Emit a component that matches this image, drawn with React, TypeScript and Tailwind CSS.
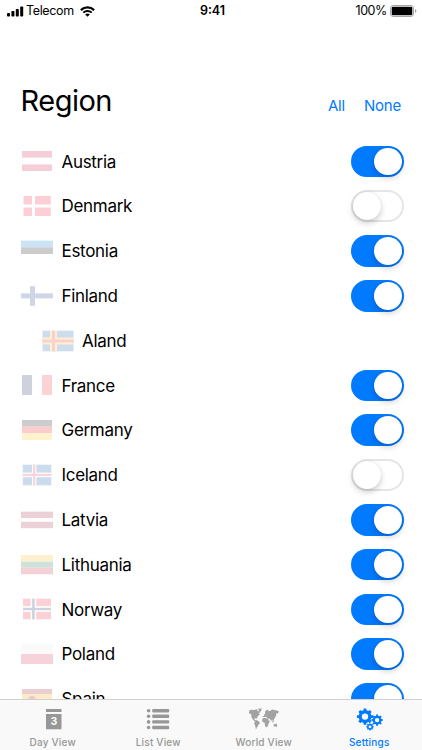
import React from 'react'

type Stripe = [x: number, y: number, width: number, height: number, fill: string]

interface Region {
  name: string
  flag: Stripe[]
  enabled?: boolean
  nested?: boolean
}

// Flags are drawn on a 32x22 grid in their faded colours
const regions: Region[] = [
  {
    name: 'Austria',
    enabled: true,
    flag: [
      [1, 1, 30, 6.6, '#f5ced7'],
      [1, 14.4, 30, 6.6, '#f5ced7'],
    ],
  },
  {
    name: 'Denmark',
    enabled: false,
    flag: [
      [2.5, 1, 8.5, 8.5, '#fccfd7'],
      [14, 1, 15.8, 8.5, '#fccfd7'],
      [2.5, 12.5, 8.5, 8.5, '#fccfd7'],
      [14, 12.5, 15.8, 8.5, '#fccfd7'],
    ],
  },
  {
    name: 'Estonia',
    enabled: true,
    flag: [
      [0, 0.6, 32, 7, '#cbe3f5'],
      [0, 7.4, 32, 6.6, '#cccccc'],
    ],
  },
  {
    name: 'Finland',
    enabled: true,
    flag: [
      [0, 8.4, 32, 5, '#ced6e8'],
      [9, 1.2, 5, 19.6, '#ced6e8'],
    ],
  },
  {
    name: 'Aland',
    nested: true,
    flag: [
      [0.5, 0.7, 31, 20.6, '#cddded'],
      [8, 0.7, 7, 20.6, '#fff0cf'],
      [0.5, 7.5, 31, 7, '#fff0cf'],
      [10, 0.7, 3, 20.6, '#fbcfd0'],
      [0.5, 9.6, 31, 2.8, '#fbcfd0'],
    ],
  },
  {
    name: 'France',
    enabled: true,
    flag: [
      [1, 1, 10, 20, '#ced1de'],
      [21, 1, 10, 20, '#fcd2d5'],
    ],
  },
  {
    name: 'Germany',
    enabled: true,
    flag: [
      [1, 1, 30, 6.7, '#cccccc'],
      [1, 7.7, 30, 6.6, '#fccdcf'],
      [1, 14.3, 30, 6.7, '#fff3ce'],
    ],
  },
  {
    name: 'Iceland',
    enabled: false,
    flag: [
      [1.8, 0.7, 28.5, 20.6, '#cddcec'],
      [11, 0.7, 4.4, 20.6, '#ffffff'],
      [1.8, 8.6, 28.5, 4.6, '#ffffff'],
      [12.1, 0.7, 2.2, 20.6, '#f9d2db'],
      [1.8, 9.8, 28.5, 2.2, '#f9d2db'],
    ],
  },
  {
    name: 'Latvia',
    enabled: true,
    flag: [
      [0, 2.6, 32, 6.4, '#ecd1d8'],
      [0, 12.8, 32, 6.4, '#ecd1d8'],
    ],
  },
  {
    name: 'Lithuania',
    enabled: true,
    flag: [
      [0, 1, 32, 6.7, '#fef0cf'],
      [0, 7.7, 32, 6, '#cde2da'],
      [0, 13.7, 32, 6.6, '#f4d1d7'],
    ],
  },
  {
    name: 'Norway',
    enabled: true,
    flag: [
      [2, 0.7, 28, 20.6, '#fcd1d6'],
      [9.6, 0.7, 5.6, 20.6, '#ffffff'],
      [2, 8.2, 28, 5.6, '#ffffff'],
      [11.1, 0.7, 2.6, 20.6, '#cdd2e0'],
      [2, 9.8, 28, 2.4, '#cdd2e0'],
    ],
  },
  {
    name: 'Poland',
    enabled: true,
    flag: [
      [0, 1, 32, 10, '#fafafa'],
      [0, 11, 32, 10, '#f8d2da'],
    ],
  },
  {
    name: 'Spain',
    enabled: true,
    flag: [
      [1, 1, 30, 20, '#fcebc8'],
      [1, 1, 30, 5, '#edced0'],
      [1, 16, 30, 5, '#edced0'],
      [7, 8.6, 2, 7, '#f0d6cf'],
      [9, 7.8, 4, 7, '#ecc9c2'],
      [13, 8.6, 2, 7, '#f0d8d0'],
    ],
  },
]

const Flag = ({ stripes }: { stripes: Stripe[] }) => (
  <svg width="32" height="22" viewBox="0 0 32 22" className="shrink-0">
    {stripes.map(([x, y, width, height, fill], i) => (
      <rect key={i} x={x} y={y} width={width} height={height} fill={fill} />
    ))}
  </svg>
)

const Toggle = ({ on, label }: { on: boolean; label: string }) => (
  <button
    role="switch"
    aria-checked={on}
    aria-label={label}
    className={
      on
        ? 'flex h-[31.5px] w-[52.5px] items-center justify-end rounded-full bg-[#007aff] pr-[2px]'
        : 'flex h-[31.5px] w-[52.5px] items-center justify-start rounded-full border-2 border-[#e5e5e5] bg-white'
    }
  >
    <span className="size-[27.5px] rounded-full bg-white shadow-[0_3px_6px_rgba(0,0,0,0.2),0_0_1px_rgba(0,0,0,0.15)]" />
  </button>
)

const RegionRow = ({ region }: { region: Region }) => (
  <li
    className={
      region.nested
        ? 'flex h-[44.8px] shrink-0 items-center pr-[18.5px] pl-[41.5px]'
        : 'flex h-[44.8px] shrink-0 items-center pr-[18.5px] pl-[21px]'
    }
  >
    <Flag stripes={region.flag} />
    <span className="ml-[8.5px] flex-1 pt-[2px] text-[17px] tracking-[-0.3px]">{region.name}</span>
    {region.enabled !== undefined && <Toggle on={region.enabled} label={region.name} />}
  </li>
)

const StatusBar = () => (
  <header className="flex h-[22px] items-center justify-between pr-[5px] pl-[7px] text-[12.5px]">
    <div className="flex w-[150px] items-center">
      <svg width="17" height="11" viewBox="0 0 17 11">
        <rect x="0" y="7" width="3" height="3.5" rx="0.8" />
        <rect x="4.4" y="5" width="3" height="5.5" rx="0.8" />
        <rect x="8.8" y="3" width="3" height="7.5" rx="0.8" />
        <rect x="13.2" y="0.5" width="3" height="10" rx="0.8" />
      </svg>
      <span className="ml-[2px] pt-px tracking-[-0.35px]">Telecom</span>
      <svg width="15" height="11" viewBox="0 0 15 11" className="ml-[6px]" fill="none" stroke="black">
        <path d="M0.9 4.1a9.4 9.4 0 0 1 13.2 0" strokeWidth="2.2" />
        <path d="M3.3 6.6a6 6 0 0 1 8.4 0" strokeWidth="2" />
        <path d="M5.2 8.5a3.3 3.3 0 0 1 4.6 0L7.5 10.8z" fill="black" stroke="none" />
      </svg>
    </div>
    <span className="pt-px pl-px font-semibold">9:41</span>
    <div className="flex w-[150px] items-center justify-end">
      <span className="pt-px tracking-[-0.4px]">100%</span>
      <svg width="27" height="12" viewBox="0 0 27 12" className="ml-[3px]">
        <rect x="0.5" y="0.5" width="23" height="11" rx="2.6" fill="white" stroke="#a5a5a5" />
        <rect x="1.7" y="1.7" width="20.6" height="8.6" rx="1.2" />
        <path d="M25 4v4q1.4-.6 1.4-2T25 4z" fill="#a5a5a5" />
      </svg>
    </div>
  </header>
)

const DayIcon = () => (
  <svg width="32" height="24" viewBox="0 0 32 24" fill="#979797">
    <rect x="9" y="2" width="15.5" height="3" />
    <rect x="9" y="7" width="15.5" height="15.3" />
    <text x="16.8" y="18.4" fill="#fafafa" fontSize="10.5" fontWeight="700" textAnchor="middle">
      3
    </text>
  </svg>
)

const ListIcon = () => (
  <svg width="32" height="24" viewBox="0 0 32 24" fill="#979797">
    {[2, 7.6, 13.2, 18.8].map((y) => (
      <g key={y}>
        <circle cx="6.6" cy={y + 1.7} r="1.8" />
        <rect x="10.2" y={y} width="17" height="3.4" rx="1" />
      </g>
    ))}
  </svg>
)

const WorldIcon = () => (
  <svg width="32" height="24" viewBox="0 0 32 24" fill="#a2a2a2">
    <path d="M1.3 3.6l2-.9 3 .3 2.1-.7 1.3.4-.5 1.2 1.2.2 1.2 1.4-.6 1.3 1 .8-1.6 1-1.2 1.7-.4 1.4-1.5-.4-1 .8.7 1.2 1.2.5-.4.8-2.3-1.2-1.2-2-1-1.3.2-2-1-1.4-1.6-.2z" />
    <path d="M9.7 2.3l2-.9 2.1.1-.6 2-1.2 2-1-.9.1-1.2z" />
    <path d="M6.9 13.4l1.6-.4 1.6 1 1.8 1.2-.5 1.8-1.2 1-.6 1.7-1 1.1-.2 1.1-.8-.5-.3-2.4-1.1-2.2z" />
    <path d="M14.5 10.6l.3-1.5 1.4-.1-.2-1.2 1.2-1-.2-1.8 1.6-2.2 1.4.2.8 1.2 1.5-.4 2-1.3 2 .6 1.6.2 2.2.6 1.2 1-1.2.7-.5 1.5-.9-.9-.7.9.4 1.5-1 .9-.1 1.3-1.2 1-.5 1.2.4 1.4-1.1.2-.8-2.2-1.1 1.8-.9-2.3-1.4-.4-.5.5-1.5-1.4-.6-1-1.5.6-1.1-.4z" />
    <path d="M14.2 12l1.5-1.1 2.4.4 1.9.5 1 2.2 1 .4-1.5 2-.4 2-1.4 1.8-1.2-.1-.7-2.3.1-1.8-1.5-.8-1.2-.8z" />
    <path d="M25.6 17.6l1.2-.9.8.2.6-.4 1 1.4-.2 1.5-1 .6-.8-.8-1.5.2z" />
    <path d="M23.8 14.1l1.2.6.2 1-1-.5z" />
  </svg>
)

// Outline of a cog with square teeth; the hole is cut out by the even-odd rule
const cogPath = (cx: number, cy: number, outer: number, root: number, hole: number, teeth: number) => {
  const step = (Math.PI * 2) / teeth
  const points: string[] = []
  for (let i = 0; i < teeth; i++) {
    const a = i * step
    const corners = [
      [root, -0.29],
      [outer, -0.22],
      [outer, 0.22],
      [root, 0.29],
    ]
    corners.forEach(([r, f]) => {
      points.push(`${cx + r * Math.sin(a + f * step)} ${cy - r * Math.cos(a + f * step)}`)
    })
  }
  return `M${points.join('L')}ZM${cx - hole} ${cy}a${hole} ${hole} 0 1 0 ${hole * 2} 0a${hole} ${hole} 0 1 0 ${-hole * 2} 0Z`
}

const SettingsIcon = () => (
  <svg width="32" height="24" viewBox="0 0 32 24" fill="#007aff" fillRule="evenodd">
    <path d={cogPath(12, 9.6, 8.2, 6.5, 3.2, 8)} />
    <path d={cogPath(24.1, 13.1, 5.7, 4.4, 2.2, 8)} />
    <path d={cogPath(17, 19.8, 3.7, 3, 1.4, 8)} />
  </svg>
)

const tabs = [
  { title: 'Day View', icon: <DayIcon /> },
  { title: 'List View', icon: <ListIcon /> },
  { title: 'World View', icon: <WorldIcon /> },
  { title: 'Settings', icon: <SettingsIcon />, active: true },
]

const TabBar = () => (
  <nav className="grid h-[51px] shrink-0 grid-cols-4 border-t border-[#cfcfcf] bg-[#f9f9f9]">
    {tabs.map((tab) => (
      <button
        key={tab.title}
        className={
          tab.active
            ? 'flex flex-col items-center pt-[7px] text-[#007aff]'
            : 'flex flex-col items-center pt-[7px] text-[#979797]'
        }
      >
        {tab.icon}
        <span className="mt-[4px] text-[10px] leading-[14px] font-medium tracking-[0.2px]">{tab.title}</span>
      </button>
    ))}
  </nav>
)

const App: React.FC = () => {
  return (
    <div className="flex h-[750px] w-[422px] flex-col overflow-hidden bg-white font-['Inter',sans-serif] text-black">
      <StatusBar />
      <main className="flex min-h-0 flex-1 flex-col overflow-hidden">
        <div className="flex h-[117px] shrink-0 items-end justify-between pr-[21px] pb-[20px] pl-[20.5px]">
          <h1 className="text-[29px] leading-[36px] tracking-[-0.5px]">Region</h1>
          <div className="flex gap-[19px] pb-[3px] text-[15px] leading-[20px] tracking-[-0.2px] text-[#007aff]">
            <button>All</button>
            <button>None</button>
          </div>
        </div>
        <ul className="flex flex-col">
          {regions.map((region) => (
            <RegionRow key={region.name} region={region} />
          ))}
        </ul>
      </main>
      <TabBar />
    </div>
  )
}

export default App
